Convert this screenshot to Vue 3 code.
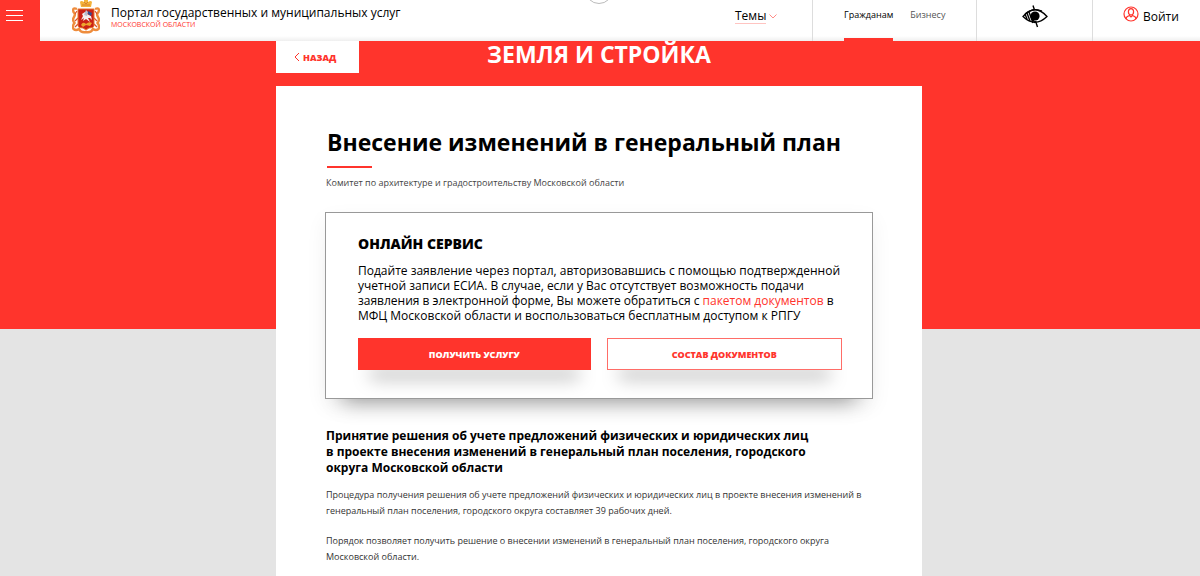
<script setup>
const audiences = [
  { label: 'Гражданам', active: true },
  { label: 'Бизнесу', active: false },
]
const details = [
  'Процедура получения решения об учете предложений физических и юридических лиц в проекте внесения изменений в генеральный план поселения, городского округа составляет 39 рабочих дней.',
  'Порядок позволяет получить решение о внесении изменений в генеральный план поселения, городского округа Московской области.',
]
</script>

<template>
  <div class="page">
    <header class="header">
      <button class="menu" type="button" aria-label="Меню">
        <span></span><span></span><span></span>
      </button>
      <a class="brand" href="#">
        <svg class="crest" viewBox="0 0 28 34" aria-hidden="true">
          <g fill="none" stroke="#ee8c3c" stroke-width="2.4">
            <path d="M5 9 Q0 7 1.500 12 Q4 14 2 17 Q0 20 2.500 23 Q0 26 1.500 29 Q4 31 7 29 Q9 33 14 32 Q19 33 21 29 Q24 31 26.500 29 Q28 26 25.500 23 Q28 20 26 17 Q24 14 26.500 12 Q28 7 23 9" />
            <path d="M3 14 L5 11 M3 21 L6 18 M3 27 L6 24 M25 14 L23 11 M25 21 L22 18 M25 27 L22 24" stroke="#d8542c" stroke-width="1.200" />
          </g>
          <path d="M9 7 L8 2 Q9 0 12 2 V0 H16 V2 Q19 0 20 2 L19 7 Z" fill="#f3b33b" />
          <path d="M10 5 H18 M12 2 L14 4 L16 2" stroke="#d9822a" fill="none" />
          <path d="M6 9 H22 V26 Q22 28 17 28 L14 30 L11 28 Q6 28 6 26 Z" fill="#cb2117" stroke="#e7792e" />
          <path d="M9 20 L11 16 L10 14 L13 12 L15 14 L19 16 L20 20 L18 18 L16 18 L18 22 L14 19 L11 21 L12 18 Z" fill="#f5eeee" />
          <path d="M14 10 L16 12 L15 16 L12 15 Z" fill="#b8bfd0" />
          <path d="M16 11 L20 13 L19 16 L16 14 Z" fill="#344d91" />
          <path d="M9 25 Q11 21 14 24 Q17 21 20 23 L18 26 L14 25 L11 27 Z" fill="#eda52e" />
        </svg>
        <span class="brand-text">
          <span class="brand-name">Портал государственных и муниципальных услуг</span>
          <span class="brand-region">Московской области</span>
        </span>
      </a>
      <span class="handle" aria-hidden="true"></span>
      <div class="topics">
        <button class="topics-button" type="button">
          <span>Темы</span>
          <svg width="8" height="5" viewBox="0 0 8 5" aria-hidden="true"><path d="M0.500 0.500 L4 4 L7.500 0.500" fill="none" stroke="#ff8d88" /></svg>
        </button>
      </div>
      <nav class="audiences">
        <a v-for="item in audiences" :key="item.label" href="#" :class="{ active: item.active }">{{ item.label }}</a>
      </nav>
      <div class="vision">
        <button type="button" aria-label="Версия для слабовидящих">
          <svg width="26" height="24" viewBox="0 0 26 24" aria-hidden="true">
            <path d="M1 11.500 Q13 -2 25 11.500 Q13 23 1 11.500 Z" fill="none" stroke="#000" stroke-width="1.300" />
            <path d="M3 9 Q11 2 20 6" fill="none" stroke="#000" stroke-width="1.200" />
            <circle cx="13" cy="11" r="4.600" />
            <path d="M11 0.500 L12.500 5 M13.500 16 L15.500 22 M3 9 L5 14 M5 8 L8 16 M7 7 L11 18 M9 11 L13 18" fill="none" stroke="#000" stroke-width="1.400" />
          </svg>
        </button>
      </div>
      <div class="account">
        <a href="#">
          <svg width="16" height="16" viewBox="0 0 16 16" fill="none" stroke="#ff342c" stroke-width="1.200" aria-hidden="true">
            <circle cx="8" cy="8" r="7" />
            <ellipse cx="8" cy="5.800" rx="2.600" ry="3.200" />
            <path d="M3 13 Q3 10.500 6.500 9.500 L8 11 L9.500 9.500 Q13 10.500 13 13" />
          </svg>
          <span>Войти</span>
        </a>
      </div>
    </header>

    <main class="main">
      <div class="content">
        <div class="section-bar">
          <a class="back" href="#">
            <svg width="6" height="10" viewBox="0 0 6 10" aria-hidden="true"><path d="M5 1 L1 5 L5 9" fill="none" stroke="#ff342c" /></svg>
            <span>Назад</span>
          </a>
          <p class="section-title">Земля и стройка</p>
        </div>
        <article class="sheet">
          <h1>Внесение изменений в генеральный план</h1>
          <p class="agency">Комитет по архитектуре и градостроительству Московской области</p>
          <section class="service">
            <h2>Онлайн сервис</h2>
            <p>
              Подайте заявление через портал, авторизовавшись с помощью подтвержденной<br>
              учетной записи ЕСИА. В случае, если у Вас отсутствует возможность подачи<br>
              заявления в электронной форме, Вы можете обратиться с <a href="#">пакетом документов</a> в<br>
              МФЦ Московской области и воспользоваться бесплатным доступом к РПГУ
            </p>
            <div class="actions">
              <button class="primary" type="button">Получить услугу</button>
              <button class="secondary" type="button">Состав документов</button>
            </div>
          </section>
          <section class="description">
            <h3>Принятие решения об учете предложений физических и юридических лиц в проекте внесения изменений в генеральный план поселения, городского округа Московской области</h3>
            <p v-for="text in details" :key="text">{{ text }}</p>
          </section>
        </article>
      </div>
    </main>
  </div>
</template>

<style>
body {
  margin: 0;
  background: #e4e4e4;
}
</style>

<style scoped>
* {
  box-sizing: border-box;
}
.page {
  min-height: 100vh;
  display: flex;
  flex-direction: column;
  font-family: "Open Sans", "Noto Sans", sans-serif;
  font-size: 12px;
  color: #000;
}
h1, h2, h3, p {
  margin: 0;
}
a {
  color: inherit;
  text-decoration: none;
}
button {
  font: inherit;
  color: inherit;
  border: 0;
  padding: 0;
  background: none;
  cursor: pointer;
}
svg {
  display: block;
  flex: none;
}
.header {
  position: relative;
  display: flex;
  height: 41px;
  background: linear-gradient(#fff 36px, #efefef);
  overflow: hidden;
}
.menu {
  width: 40px;
  padding: 10px 17px 0 6px;
  display: flex;
  flex-direction: column;
  gap: 4px;
  background: #ff342c;
}
.menu span {
  width: 100%;
  height: 1px;
  background: #fff;
}
.brand {
  display: flex;
  gap: 11px;
  flex: 1;
  margin-left: 32px;
}
.crest {
  width: 28px;
  height: 34px;
}
.brand-text {
  display: flex;
  flex-direction: column;
  padding-top: 5px;
}
.brand-name {
  line-height: 16px;
  white-space: nowrap;
}
.brand-region {
  font-size: 7px;
  line-height: 8px;
  font-weight: 300;
  text-transform: uppercase;
  font-weight: 400;
  color: #ff342c;
}
.handle {
  position: absolute;
  left: 50%;
  top: -24px;
  width: 28px;
  height: 28px;
  margin-left: -15px;
  border: 1px solid #bbb;
  border-radius: 50%;
}
.topics {
  width: 78px;
  padding: 8px 0 0 1px;
}
.topics-button {
  display: flex;
  align-items: center;
  gap: 3px;
}
.topics-button span {
  line-height: 15px;
  border-bottom: 1px solid #ffc4c1;
}
.audiences {
  width: 164px;
  display: flex;
  gap: 17px;
  padding-left: 31px;
  border-left: 1px solid #ddd;
  font-size: 9px;
  color: #555;
}
.audiences a {
  padding-top: 9px;
  line-height: 12px;
}
.audiences .active {
  color: #000;
  border-bottom: 3px solid #ff342c;
}
.vision {
  width: 116px;
  display: flex;
  justify-content: center;
  align-items: flex-start;
  padding-top: 5px;
  border-left: 1px solid #ddd;
}
.account {
  width: 108px;
  padding: 6px 0 0 30px;
  border-left: 1px solid #ddd;
}
.account a {
  display: flex;
  gap: 4px;
}
.account span {
  padding-top: 3px;
  line-height: 16px;
}
.main {
  flex: 1;
  display: flex;
  justify-content: center;
  padding-right: 2px;
  background: linear-gradient(#ff342c 288px, #e4e4e4 288px);
}
.content {
  width: 100%;
  max-width: 646px;
  display: flex;
  flex-direction: column;
}
.section-bar {
  display: grid;
  grid-template-columns: 83px 1fr 83px;
  align-items: start;
  height: 45px;
}
.back {
  height: 32px;
  display: flex;
  align-items: center;
  padding-left: 18px;
  gap: 3px;
  background: #fff;
  color: #ff342c;
  font-size: 9px;
  font-weight: 800;
  text-transform: uppercase;
}
.section-title {
  color: #fff;
  font-size: 23px;
  line-height: 26px;
  font-weight: 700;
  text-align: center;
  text-transform: uppercase;
}
.sheet {
  flex: 1;
  padding: 40px 49px 12px;
  background: #fff;
}
h1 {
  padding-left: 2px;
  font-size: 23px;
  line-height: 32px;
  font-weight: 700;
}
h1::after {
  content: "";
  display: block;
  width: 45px;
  height: 2px;
  margin-top: 8px;
  background: #ff342c;
}
.agency {
  margin-top: 8px;
  padding-left: 1px;
  font-size: 9px;
  line-height: 14px;
  color: #444;
}
.service {
  margin-top: 22px;
  padding: 19px 30px 28px 32px;
  border: 1px solid #999;
  box-shadow: 0 20px 20px -18px rgba(0, 0, 0, 0.4), 0 8px 20px rgba(0, 0, 0, 0.06);
}
h2 {
  font-size: 14px;
  line-height: 24px;
  font-weight: 800;
  text-transform: uppercase;
}
.service p {
  margin-top: 7px;
  font-size: 12px;
  line-height: 15px;
}
.service p a {
  color: #ff342c;
}
.actions {
  display: grid;
  grid-template-columns: 233fr 236fr;
  gap: 16px;
  margin-top: 15px;
}
.actions button {
  height: 32px;
  border: 1px solid #ff342c;
  font-size: 9px;
  font-weight: 800;
  text-transform: uppercase;
  box-shadow: 0 20px 18px -12px rgba(0, 0, 0, 0.35);
}
.actions .primary {
  color: #fff;
  background: #ff342c;
}
.actions .secondary {
  color: #ff342c;
  border-color: #ff6d67;
  background: #fff;
}
.description {
  padding-left: 1px;
}
h3 {
  max-width: 490px;
  margin-top: 29px;
  font-size: 12px;
  line-height: 16px;
  font-weight: 700;
}
.description p {
  margin-top: 11px;
  font-size: 9px;
  line-height: 16px;
  color: #333;
}
.description p + p {
  margin-top: 14px;
}
</style>
